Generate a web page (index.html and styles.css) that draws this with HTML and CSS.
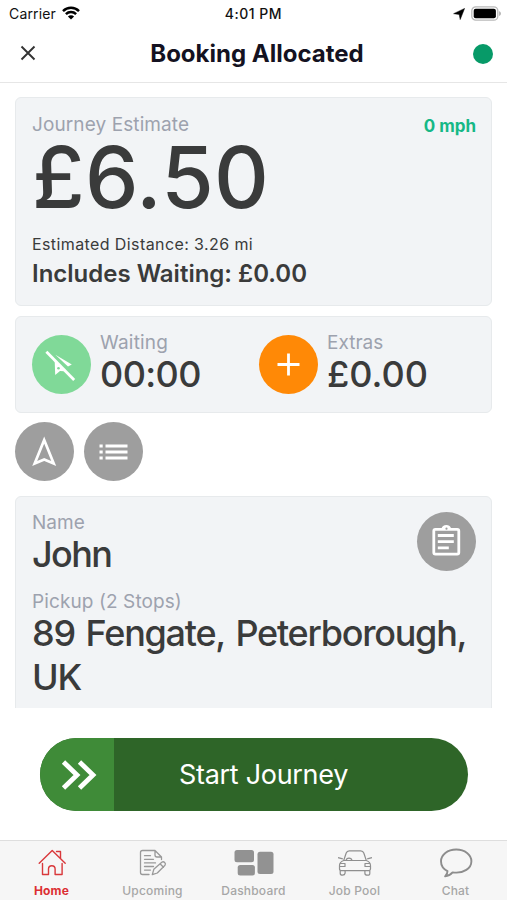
FILE: index.html
```html
<!DOCTYPE html>
<html lang="en">
<head>
<meta charset="utf-8">
<title>Booking Allocated</title>
<link rel="stylesheet" href="styles.css">
</head>
<body>
<div class="status">
  <div class="status-left"><span class="carrier">Carrier</span>
    <svg width="18" height="14" viewBox="0 0 18 14" fill="none" stroke="#000" stroke-width="2.5"><path d="M1 5.1A11.5 11.5 0 0 1 17 5.1M3.9 8.2a7.3 7.3 0 0 1 10.2 0"/><path d="M9 13.6 5.900 10.500a4.400 4.400 0 0 1 6.200 0z" fill="#000" stroke="none"/></svg>
  </div>
  <span class="clock">4:01 PM</span>
  <div class="status-right">
    <svg width="12" height="12" viewBox="0 0 12 12"><path d="M11.6.4 7.2 11.6 6.2 6.4.6 5.7z" stroke="#000" stroke-width=".5"/></svg>
    <svg width="31" height="16" viewBox="0 0 31 16"><rect x=".8" y=".8" width="26" height="13.4" rx="4" fill="#fff" stroke="#b9b9b9" stroke-width="1.3"/><rect x="2.7" y="2.7" width="22.2" height="9.6" rx="2"/><path d="M28.2 5.2c2.2.7 2.2 4 0 4.7z" fill="#aaa"/></svg>
  </div>
</div>
<header class="header">
  <svg class="close" width="16" height="16" viewBox="0 0 16 16" fill="none" stroke="#333" stroke-width="1.9"><path d="M1.5 1.5 14.5 14.5M14.5 1.5 1.5 14.5"/></svg>
  <h1 class="title">Booking Allocated</h1>
  <span class="online"></span>
</header>
<main class="content">
  <section class="card estimate">
    <div class="row"><span class="label je">Journey Estimate</span><span class="speed">0 mph</span></div>
    <div class="price">£6.50</div>
    <div class="distance">Estimated Distance: 3.26 mi</div>
    <div class="includes">Includes Waiting: £0.00</div>
  </section>
  <section class="card meters">
    <div class="meter">
      <span class="round green"><svg width="59" height="59" viewBox="0 0 59 59" fill="#fff"><path d="M23.3 19.8 39.8 29.6 36 31.4z"/><path d="M14.8 16.2 42.2 44.6" fill="none" stroke="#80d998" stroke-width="6"/><path d="M14.4 16.8 42.2 45" fill="none" stroke="#fff" stroke-width="2.8"/><path d="M22.7 26 32.5 36.2 28 35.9 23.2 39.9z"/><circle cx="26.5" cy="33.2" r="1.3" fill="#80d998"/></svg></span>
      <div><div class="label wait">Waiting</div><div class="value time">00:00</div></div>
    </div>
    <div class="meter">
      <span class="round orange"><svg width="59" height="59" viewBox="0 0 59 59" stroke="#fff" stroke-width="2.8"><path d="M29.5 18.5v22M18.5 29.5h22"/></svg></span>
      <div><div class="label extras">Extras</div><div class="value money">£0.00</div></div>
    </div>
  </section>
  <div class="actions">
    <span class="round grey"><svg width="59" height="59" viewBox="0 0 59 59" fill="none" stroke="#fff" stroke-width="2.7"><path d="M29.2 18 19.7 41.5 29.2 37.4 38.7 41.5z"/></svg></span>
    <span class="round grey"><svg width="59" height="59" viewBox="0 0 59 59" fill="none" stroke="#fff" stroke-width="2.9"><path d="M15.5 24h3.2M21.5 24h22M15.5 30h3.2M21.5 30h22M15.5 36h3.2M21.5 36h22"/></svg></span>
  </div>
  <section class="card booking">
    <div class="booking-top">
      <div><div class="label name-l">Name</div><div class="value name">John</div></div>
      <span class="round grey"><svg width="59" height="59" viewBox="0 0 59 59" fill="none" stroke="#fff" stroke-width="2.8"><rect x="16.8" y="17.3" width="25" height="24.8" rx="1.6"/><path d="M20.8 23.5h16M20.8 29.7h16M20.8 35.9h11"/><path d="M24.5 17.2c.2-5.6 9.4-5.6 9.6 0z" fill="#fff" stroke="none"/><circle cx="29.5" cy="16.7" r="1.1" fill="#9e9e9e" stroke="none"/></svg></span>
    </div>
    <div class="label pickup">Pickup (2 Stops)</div>
    <div class="value address"><span class="line1">89 Fengate, Peterborough,</span><br>UK</div>
  </section>
</main>
<div class="slide">
  <span class="thumb"><svg width="38" height="32" viewBox="0 0 38 32" fill="none" stroke="#fff" stroke-width="4.8"><path d="M3.5 3 17 16 3.5 29M19.500 3 33 16 19.500 29"/></svg></span>
  <span class="slide-text">Start Journey</span>
</div>
<nav class="tabs">
  <div class="tab active"><svg width="36" height="32" viewBox="0 0 36 32" fill="none" stroke="#d9383b" stroke-width="1.4" stroke-linecap="round" stroke-linejoin="round"><path d="M5.2 17.3 18.2 4.5 31.2 17.3M22.5 5.5h4v7M8.5 17.5v11h6v-5.5a3.3 3.3 0 0 1 6.6 0v5.5h7v-11"/></svg><span class="t1">Home</span></div>
  <div class="tab"><svg width="36" height="32" viewBox="0 0 36 32" fill="none" stroke="#999" stroke-width="1.3" stroke-linejoin="round" stroke-linecap="round"><path d="M20 4.5H7.5a2 2 0 0 0-2 2v20a2 2 0 0 0 2 2h6.5M20 4.5l6.5 6.5v2.5M20 4.5V9a2 2 0 0 0 2 2h4.5M9.5 9.7h6M9.5 13.3h9M9.5 16.9h11M9.5 20.5h9M9.5 24.1h6M18.8 23.3 26.8 16.2c2-1.3 4.6 1 3.2 3L22.3 27l-5 1.7zM25 17.8l3.5 3.5"/></svg><span class="t2">Upcoming</span></div>
  <div class="tab"><svg width="42" height="32" viewBox="0 0 42 32" fill="#929292"><rect x="1.5" y="4" width="19.5" height="12.2" rx="2.5"/><rect x="4.7" y="19" width="17.2" height="10.5" rx="2.5"/><rect x="24.500" y="5.800" width="16" height="22.200" rx="2.500"/></svg><span class="t3">Dashboard</span></div>
  <div class="tab"><svg width="36" height="32" viewBox="0 0 36 32" fill="none" stroke="#8f8f8f" stroke-width="1.2" stroke-linejoin="round"><path d="M6.7 14.5 9.2 7q.8-2.2 3-2.2h11.6q2.2 0 3 2.2l2.5 7.500zM1 11.700l4.800 1.200M35 11.700l-4.800 1.200M6.700 14.500q-4.200 1.300-4.200 5.300v3.200q0 1.700 2 1.700h27q2 0 2-1.700v-3.200q0-4-4.200-5.300M9 14.500c.5-3.300 5.500-3.300 6 0M3 17.500h5v3H3M33 17.500h-5v3h5M3.200 24.700v2.500q0 2 2.300 2t2.600-2v-2.500M27.900 24.700v2.500q0 2 2.600 2t2.300-2v-2.500"/></svg><span class="t4">Job Pool</span></div>
  <div class="tab"><svg width="36" height="32" viewBox="0 0 36 32" fill="none" stroke="#8d8d8d" stroke-width="1.9" stroke-linejoin="round"><path d="M18.2 3.5C9.5 3.500 3 8.800 3 15.200c0 4.500 2.800 8 6.500 9.900.1 2-1 3.800-2.400 5.200 3.700-.3 5.700-1.800 7.500-3.900 11.500 1.600 18.800-4.500 18.800-11.200 0-6.400-6.500-11.700-15.200-11.700z"/></svg><span class="t5">Chat</span></div>
</nav>
</body>
</html>
```
FILE: styles.css
```css
* { box-sizing: border-box; }
body { margin: 0; width: 507px; height: 900px; overflow: hidden; display: flex; flex-direction: column; background: #fff; color: #3a3b3b; font-family: Inter, "Liberation Sans", sans-serif; white-space: nowrap; }
svg { display: block; flex: none; }
.status { height: 27px; display: grid; grid-template-columns: 1fr auto 1fr; align-items: center; color: #111; }
.status-left { display: flex; align-items: center; gap: 6px; padding-left: 9px; font-size: 14px; letter-spacing: .15px; }
.status-left svg { margin-top: -2px; }
.clock { font-size: 14px; font-weight: 500; letter-spacing: .5px; }
.status-right { display: flex; align-items: center; justify-content: flex-end; gap: 6px; padding-right: 5px; }
.header { height: 56px; display: grid; grid-template-columns: 60px 1fr 53px; align-items: center; border-bottom: 1px solid #e6e6e6; }
.close { margin-left: 20px; margin-top: -4px; }
.title { margin: 0; text-align: center; font-size: 24px; line-height: 30px; font-weight: 700; color: #141221; padding-bottom: 2px; }
.online { width: 20px; height: 20px; border-radius: 50%; background: #079a68; margin-left: 19px; margin-top: -2px; }
.content { height: 625px; overflow: hidden; padding: 14px 15px 0; }
.card { border: 1px solid #e7eaec; border-radius: 6px; background: #f2f4f6; padding: 0 15px 0 16px; }
.label { font-size: 19px; line-height: 24px; color: #9da2ae; }
.je { letter-spacing: .1px; }
.value { font-size: 36px; line-height: 44px; font-weight: 500; }
.estimate { height: 209px; padding-top: 15px; }
.row { display: flex; justify-content: space-between; }
.speed { font-size: 17px; line-height: 27px; font-weight: 700; color: #16b886; }
.price { font-size: 85px; line-height: 88px; font-weight: 500; margin-top: -6px; height: 96px; letter-spacing: .3px; }
.distance { font-size: 16px; line-height: 24px; margin-top: 2px; letter-spacing: .4px; }
.includes { font-size: 24px; line-height: 30px; font-weight: 600; margin-top: 3px; }
.meters { height: 97px; margin-top: 10px; display: grid; grid-template-columns: 227px 1fr; padding-top: 14px; }
.meter { display: flex; gap: 9px; }
.meter .round { margin-top: 4px; }
.meter .value { margin-top: -3px; }
.time { letter-spacing: -.6px; }
.wait { letter-spacing: .2px; }
.round { width: 59px; height: 59px; border-radius: 50%; flex: none; }
.green { background: #80d998; }
.orange { background: #ff8906; }
.grey { background: #9e9e9e; }
.actions { display: flex; gap: 10px; margin-top: 9px; height: 59px; }
.booking { height: 240px; margin-top: 15px; padding-top: 14px; }
.booking-top { display: flex; justify-content: space-between; height: 79px; }
.booking-top .round { margin-top: 1px; }
.booking .value { margin-top: -3px; }
.name { letter-spacing: -1.6px; }
.address { letter-spacing: -1.25px; word-spacing: 2.4px; }
.pickup { letter-spacing: .1px; }
.slide { width: 428px; height: 73px; margin: 30px 0 0 40px; border-radius: 37px; overflow: hidden; display: flex; background: #2e6528; color: #fff; flex: none; }
.thumb { width: 74px; background: #3f8b38; display: flex; align-items: center; justify-content: center; padding-left: 3px; }
.slide-text { font-size: 27px; line-height: 73px; margin-left: 65px; letter-spacing: -.3px; }
.tabs { margin-top: auto; height: 60px; display: grid; grid-template-columns: repeat(5, 1fr); border-top: 1px solid #dedede; background: #f6f6f6; padding: 5px 1px 0; flex: none; }
.tab { display: flex; flex-direction: column; align-items: center; font-size: 12px; line-height: 16px; font-weight: 500; color: #a6a6a6; letter-spacing: .2px; }
.tab span { margin-top: 5px; }
.active { color: #dc2f33; font-weight: 700; }
```
